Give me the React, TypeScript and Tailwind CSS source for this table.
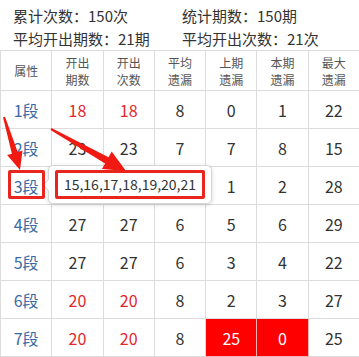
import React from "react"

const FONT = { fontFamily: '"Microsoft YaHei", "Noto Sans CJK SC", "Noto Sans", sans-serif' }

type Row = {
  label: string
  a?: number
  b?: number
  avg?: number
  last?: number
  cur?: number
  max: number
  red?: boolean
  hot?: boolean
}

// row 3 values sit under the tooltip, so they are left out
const ROWS: Row[] = [
  { label: "1段", a: 18, b: 18, avg: 8, last: 0, cur: 1, max: 22, red: true },
  { label: "2段", a: 23, b: 23, avg: 7, last: 7, cur: 8, max: 15 },
  { label: "3段", last: 1, cur: 2, max: 28 },
  { label: "4段", a: 27, b: 27, avg: 6, last: 5, cur: 6, max: 29 },
  { label: "5段", a: 27, b: 27, avg: 6, last: 3, cur: 4, max: 22 },
  { label: "6段", a: 20, b: 20, avg: 8, last: 2, cur: 3, max: 27, red: true },
  { label: "7段", a: 20, b: 20, avg: 8, last: 25, cur: 0, max: 25, red: true, hot: true },
]

const HEAD = ["属性", "开出\n期数", "开出\n次数", "平均\n遗漏", "上期\n遗漏", "本期\n遗漏", "最大\n遗漏"]

export default function App() {
  return (
    <div className="relative w-[359px] h-[357px] overflow-hidden bg-white text-[#333]" style={FONT}>
      {/* summary */}
      <div className="grid grid-cols-[169px_1fr] pl-[13px] pt-[4px] text-[15px] leading-[23px] h-[50px]">
        <div>累计次数：150次</div>
        <div>统计期数：150期</div>
        <div>平均开出期数：21期</div>
        <div>平均开出次数：21次</div>
      </div>

      <table className="table-fixed border-collapse w-[360px]">
        <thead>
          <tr className="h-[40px]">
            {HEAD.map((h) => (
              <th
                key={h}
                className="w-[51px] border border-[#dcdcdc] font-normal text-[12px] leading-[17px] text-[#555] whitespace-pre-line p-0"
              >
                {h}
              </th>
            ))}
          </tr>
        </thead>
        <tbody>
          {ROWS.map((r) => (
            <tr key={r.label} className="h-[38px] text-[16px]">
              <td className="border border-[#dcdcdc] text-center text-[#3a6aa3] p-0">{r.label}</td>
              <td className={`border border-[#dcdcdc] text-center p-0 ${r.red ? "text-[#e5262b]" : ""}`}>{r.a}</td>
              <td className={`border border-[#dcdcdc] text-center p-0 ${r.red ? "text-[#e5262b]" : ""}`}>{r.b}</td>
              <td className="border border-[#dcdcdc] text-center p-0">{r.avg}</td>
              <td
                className={`border text-center p-0 ${
                  r.hot ? "bg-[#ff0000] text-white border-[#f4b0b0]" : "border-[#dcdcdc]"
                }`}
              >
                {r.last}
              </td>
              <td
                className={`border text-center p-0 ${
                  r.hot ? "bg-[#ff0000] text-white border-[#f4b0b0]" : "border-[#dcdcdc]"
                }`}
              >
                {r.cur}
              </td>
              <td className="border border-[#dcdcdc] text-center p-0">{r.max}</td>
            </tr>
          ))}
        </tbody>
      </table>

      {/* tooltip */}
      <div className="absolute left-[48px] top-[165px] w-[164px] h-[39px] rounded-[5px] border border-[#d6d6d6] bg-white shadow-[0_1px_4px_rgba(0,0,0,0.15)] flex items-center justify-center">
        <span className="absolute -left-[5px] top-[15px] w-[8px] h-[8px] rotate-45 bg-white border-l border-b border-[#d6d6d6]" />
        <div className="w-[150px] h-[29px] border-[3px] border-[#e8261e] rounded-[2px] flex items-center justify-center text-[14px] text-[#333]">
          15,16,17,18,19,20,21
        </div>
      </div>

      {/* highlight around 3段 */}
      <div className="absolute left-[8px] top-[170px] w-[37px] h-[29px] border-[3px] border-[#e8261e] rounded-[2px]" />

      {/* arrows */}
      <svg className="absolute left-0 top-0 pointer-events-none" width="359" height="357">
        <polygon
          fill="#f01a12"
          points="5,116.7 17.7,151.9 22.5,150.5 20,170 7.1,155.1 11.9,153.7 3,117.3"
        />
        <polygon
          fill="#f01a12"
          points="51.5,128.1 108.5,157.2 111.7,151.6 126,171 101.9,169 105.1,163.4 50.5,129.9"
        />
      </svg>
    </div>
  )
}
